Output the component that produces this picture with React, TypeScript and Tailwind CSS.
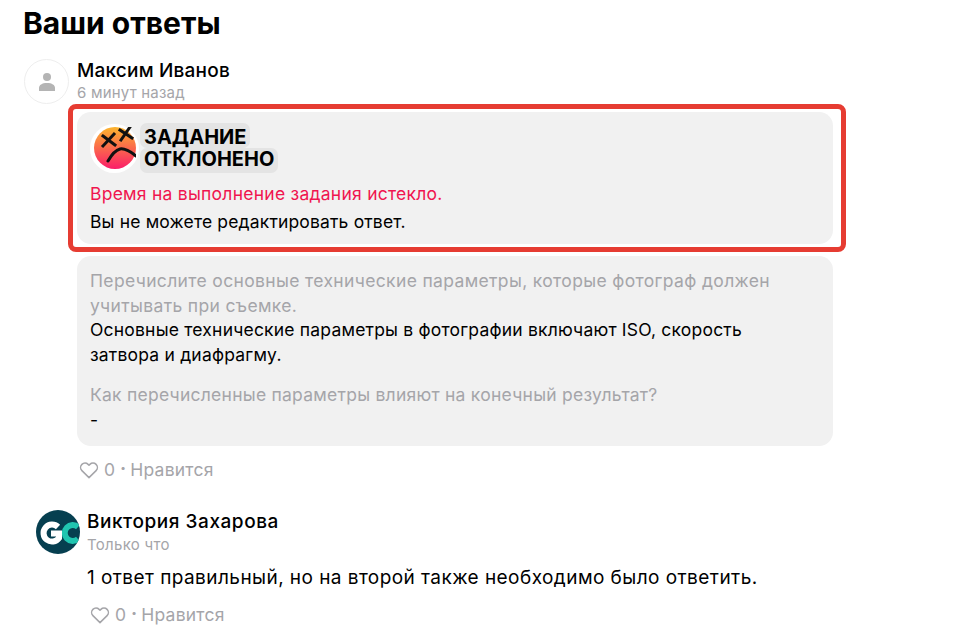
import React from "react";

const LikeRow = () => (
  <div className="flex items-center text-[17.5px] leading-[20px] tracking-[0.25px] text-[#a5a5a9]">
    <svg width="20" height="18" viewBox="0 0 20 18" fill="none" stroke="#a5a5a9" strokeWidth="1.5" strokeLinejoin="round">
      <path d="M10 16.6 2.9 9.6a4.4 4.4 0 0 1 0-6.2 4.4 4.4 0 0 1 6.2 0l.9.9.9-.9a4.4 4.4 0 0 1 6.2 0 4.4 4.4 0 0 1 0 6.2z" />
    </svg>
    <span className="ml-[5px]">0</span>
    <span className="ml-[5px] mb-[6px] text-[10px] leading-[10px]">•</span>
    <span className="ml-[4px]">Нравится</span>
  </div>
);

const DeadFace = () => (
  <div className="flex h-[49px] w-[49px] shrink-0 items-center justify-center rounded-full bg-white">
    <svg width="42" height="42" viewBox="0 0 42 42" fill="none">
      <defs>
        <linearGradient id="face" x1="0" y1="0" x2="0" y2="1">
          <stop offset="0" stopColor="#fbb52e" />
          <stop offset="1" stopColor="#fb1d6a" />
        </linearGradient>
      </defs>
      <circle cx="21" cy="21" r="21" fill="url(#face)" />
      <g stroke="#111" strokeWidth="3" strokeLinecap="square">
        <path d="M9 9 21 18M9 19 20 7" />
        <path d="M26 3 38 11M27 13 36 0" />
      </g>
      <path d="M14 34C18 27 22 23 26 22C31 21 37 25 42 29" stroke="#111" strokeWidth="3" strokeLinecap="round" />
    </svg>
  </div>
);

const GcLogo = () => (
  <div className="h-[44px] w-[44px] shrink-0 overflow-hidden rounded-full bg-[#063f50]">
    <svg width="44" height="44" viewBox="0 0 44 44" fill="none">
      <path d="M42 17A8 8 0 1 0 42 29" stroke="#20c5b0" strokeWidth="6" />
      <path d="M22 17A8.5 8.5 0 1 0 23 28V23.5H15" stroke="#fff" strokeWidth="6" />
    </svg>
  </div>
);

export default function App() {
  return (
    <div className="h-[639px] w-[953px] overflow-hidden bg-white pl-[23px] font-['Inter',sans-serif] text-black">
      <h1 className="pt-[5px] text-[30px] font-bold leading-[36px]">Ваши ответы</h1>

      <div className="mt-[18px] flex">
        <div className="flex h-[45px] w-[45px] shrink-0 translate-x-[1px] items-center justify-center rounded-full border border-[#eeeeee] bg-white">
          <svg width="18" height="20" viewBox="0 0 18 20" fill="#b4b4b4">
            <circle cx="9" cy="5" r="4" />
            <path d="M1 19v-3c0-3 3-5 8-5s8 2 8 5v3z" />
          </svg>
        </div>
        <div className="ml-[9px]">
          <div className="mt-[1px] text-[19px] font-medium leading-[22px] tracking-[0.2px]">Максим Иванов</div>
          <div className="mt-[1px] text-[15px] leading-[20px] tracking-[0.2px] text-[#a5a5a9]">6 минут назад</div>
        </div>
      </div>

      <div className="relative ml-[54px] mt-[8px] w-[756px]">
        <div className="rounded-[14px] bg-[#f1f1f1] px-[13px] pb-[10px] pt-[11px]">
          <div className="flex items-center">
            <DeadFace />
            <div className="ml-[1px] text-[20px] font-bold">
              <div className="w-fit rounded-[7px] bg-[#e4e4e4] px-[4px] pt-[3px] leading-[22px]">ЗАДАНИЕ</div>
              <div className="w-fit rounded-[7px] bg-[#e4e4e4] px-[4px] pb-[3px] leading-[22px]">ОТКЛОНЕНО</div>
            </div>
          </div>
          <div className="mt-[9px] text-[17.5px] leading-[24px] tracking-[0.25px] text-[#f0154f]">Время на выполнение задания истекло.</div>
          <div className="mt-[4px] text-[17.5px] leading-[24px] tracking-[0.16px]">Вы не можете редактировать ответ.</div>
        </div>
        <div className="absolute -left-[9px] -right-[13px] -top-[8px] -bottom-[8px] rounded-[8px] border-[5px] border-[#e63c32]" />
      </div>

      <div className="ml-[54px] mt-[12px] w-[756px] rounded-[14px] bg-[#f1f1f1] px-[13px] pb-[14px] pt-[13px] text-[17.5px] leading-[24.5px] tracking-[0.25px]">
        <div className="tracking-[0.35px] text-[#a5a5a9]">
          Перечислите основные технические параметры, которые фотограф должен
          <br />
          учитывать при съемке.
        </div>
        <div className="tracking-[0.2px]">
          Основные технические параметры в фотографии включают ISO, скорость
          <br />
          затвора и диафрагму.
        </div>
        <div className="mt-[16px] text-[#a5a5a9]">Как перечисленные параметры влияют на конечный результат?</div>
        <div>-</div>
      </div>

      <div className="ml-[56px] mt-[14px]">
        <LikeRow />
      </div>

      <div className="ml-[13px] mt-[30px] flex">
        <GcLogo />
        <div className="ml-[7px]">
          <div className="mt-[1px] text-[19px] font-medium leading-[22px] tracking-[0.55px]">Виктория Захарова</div>
          <div className="mt-[2px] text-[15px] leading-[20px] tracking-[0.3px] text-[#a5a5a9]">Только что</div>
        </div>
      </div>
      <div className="ml-[64px] mt-[10px] text-[19px] leading-[26px] tracking-[0.44px]">
        1 ответ правильный, но на второй также необходимо было ответить.
      </div>
      <div className="ml-[67px] mt-[14px]">
        <LikeRow />
      </div>
    </div>
  );
}
